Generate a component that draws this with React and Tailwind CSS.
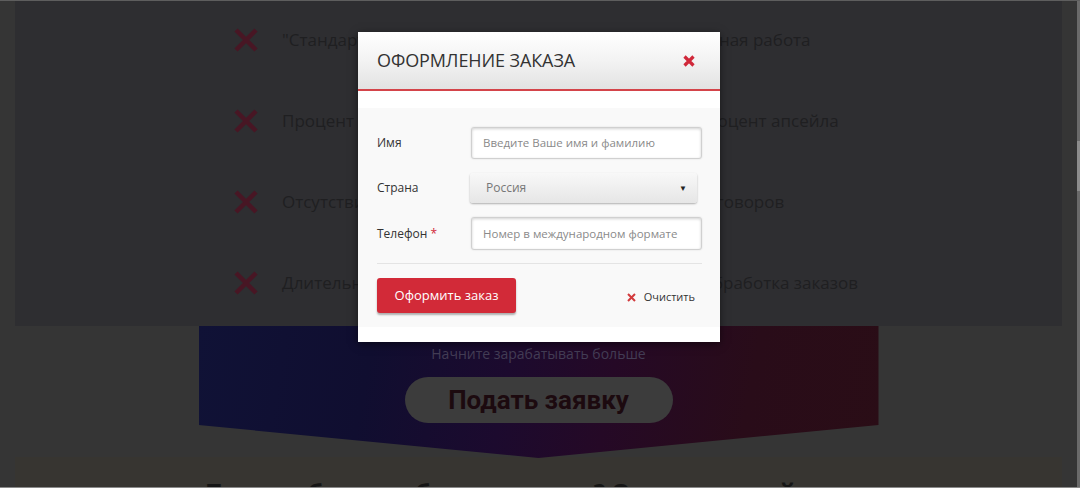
import React from "react";

const rows = [
  "\"Стандартные\" скрипты продаж, неэффективная ручная работа",
  "Процент выкупа ниже среднего по рынку, малый процент апсейла",
  "Отсутствие контроля качества и записи любых переговоров",
  "Длительное ожидание звонка и очень медленная обработка заказов",
];

function BigX() {
  return (
    <svg width="26" height="26" viewBox="0 0 26 26" className="shrink-0">
      <path d="M3 3 L23 23 M23 3 L3 23" stroke="#481624" strokeWidth="4.5" strokeLinecap="butt" />
    </svg>
  );
}

export default function App() {
  return (
    <div
      className="relative w-[1080px] h-[488px] overflow-hidden bg-[#353535] border-t border-[#5e5e5e] border-b border-b-[#8a8a8a] flex"
      style={{ fontFamily: "'Open Sans', 'Noto Sans', sans-serif" }}
    >
      <div className="flex-1 flex flex-col">
        {/* list panel */}
        <div className="mx-[15px] h-[325px] bg-[#2e2e31] flex flex-col shrink-0">
          {rows.map((t, i) => (
            <div key={i} className="h-[81px] flex items-center pl-[218px] gap-[23px] pb-[3px]">
              <BigX />
              <span className="text-[17px] text-[#1f1f21] whitespace-nowrap">{t}</span>
            </div>
          ))}
        </div>

        {/* banner */}
        <div className="w-[680px] h-[132px] mx-auto shrink-0 flex flex-col items-center pt-[19px] [clip-path:polygon(0_0,100%_0,100%_75%,50%_100%,0_75%)] bg-[linear-gradient(100deg,#101236_0%,#100e30_25%,#1c0a2e_45%,#250926_60%,#290c19_80%,#2a0d16_100%)]">
          <div className="text-[14px] leading-[18px] text-[#433d55]">Начните зарабатывать больше</div>
          <div className="mt-[14px] w-[268px] h-[46px] rounded-full bg-[#3c3c3c] flex items-center justify-center">
            <span className="text-[26px] font-bold text-[#1c0a0f]" style={{ fontFamily: "Roboto, sans-serif" }}>
              Подать заявку
            </span>
          </div>
        </div>

        {/* bottom section */}
        <div className="mx-[15px] -mt-[1px] flex-1 bg-[#373531] pl-[190px] pt-[17px] overflow-hidden">
          <div className="text-[24px] font-bold text-[#151515] whitespace-nowrap">
            Почему бы не работать с нами? Ответ простой
          </div>
        </div>
      </div>

      {/* scrollbar */}
      <div className="w-[3px] bg-[#6a6a6a] flex flex-col">
        <div className="h-[140px]" />
        <div className="h-[50px] bg-[#8c8c8c]" />
      </div>

      {/* modal */}
      <div
        className="absolute left-[358px] top-[31px] w-[362px] h-[310px] bg-white shadow-[0_2px_8px_rgba(0,0,0,0.5)] flex flex-col"
        style={{ fontFamily: "'Open Sans', 'Noto Sans', sans-serif" }}
      >
        <div className="h-[59px] bg-[linear-gradient(180deg,#ffffff_0%,#f3f3f3_50%,#e2e2e2_100%)] border-b-2 border-[#d4444a] flex items-center justify-between pl-[19px] pr-[25px]">
          <span className="text-[18px] text-[#333] tracking-[-0.1px]">ОФОРМЛЕНИЕ ЗАКАЗА</span>
          <svg width="12" height="12" viewBox="0 0 12 12">
            <path d="M1.5 1.5 L10.5 10.5 M10.5 1.5 L1.5 10.5" stroke="#d0283a" strokeWidth="3.2" />
          </svg>
        </div>
        <div className="h-[17px]" />
        <div className="bg-[#f9f9f9] pl-[19px] pr-[18px] pt-[19px] pb-[14px] flex flex-col">
          <div className="flex items-center h-[32px]">
            <div className="w-[94px] text-[12px] text-[#333]">Имя</div>
            <div className="w-[231px] h-[32px] rounded-[3px] bg-white border border-[#d0d0d0] shadow-[inset_0_1px_3px_rgba(0,0,0,0.18),0_0_2px_rgba(0,0,0,0.12)] flex items-center pl-[11px] text-[11.5px] text-[#8a8a8a]">
              Введите Ваше имя и фамилию
            </div>
          </div>
          <div className="flex items-center h-[30px] mt-[14px]">
            <div className="w-[93px] text-[12px] text-[#333]">Страна</div>
            <div className="w-[227px] h-[30px] rounded-[3px] bg-[linear-gradient(180deg,#f8f8f8,#e6e6e6)] shadow-[0_1px_2px_rgba(0,0,0,0.3)] flex items-center justify-between pl-[16px] pr-[10px] text-[12px] text-[#777]">
              <span>Россия</span>
              <span className="text-[8px] text-[#222]">▼</span>
            </div>
          </div>
          <div className="flex items-center h-[33px] mt-[14px]">
            <div className="w-[94px] text-[12px] text-[#333]">
              Телефон <span className="text-[#d2283a]">*</span>
            </div>
            <div className="w-[231px] h-[33px] rounded-[3px] bg-white border border-[#d0d0d0] shadow-[inset_0_1px_3px_rgba(0,0,0,0.18),0_0_2px_rgba(0,0,0,0.12)] flex items-center pl-[11px] text-[11.5px] text-[#8a8a8a]">
              Номер в международном формате
            </div>
          </div>
          <div className="h-px bg-[#e4e4e4] mt-[13px] w-[325px]" />
          <div className="flex items-center justify-between mt-[14px] w-[318px]">
            <div className="w-[139px] h-[35px] rounded-[3px] bg-[#d22a38] shadow-[0_2px_2px_rgba(0,0,0,0.3)] flex items-center justify-center text-[13px] text-white">
              Оформить заказ
            </div>
            <div className="flex items-center gap-[8px] mt-[4px]">
              <svg width="9" height="9" viewBox="0 0 9 9">
                <path d="M1 1 L8 8 M8 1 L1 8" stroke="#d23a3c" strokeWidth="2" />
              </svg>
              <span className="text-[11px] text-[#333]">Очистить</span>
            </div>
          </div>
        </div>
      </div>
    </div>
  );
}
